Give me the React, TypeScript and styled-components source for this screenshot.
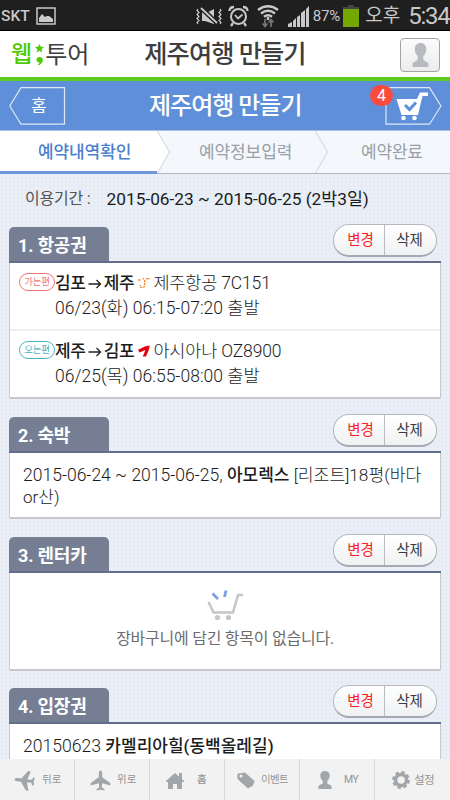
import React from 'react';
import styled, { createGlobalStyle } from 'styled-components';

const Global = createGlobalStyle`
  * { box-sizing: border-box; }
  html, body { margin: 0; padding: 0; overflow: hidden; }
  body { font-family: Roboto, "Noto Sans CJK KR", sans-serif; color: #1c1c1c; }
  svg { display: block; flex: none; }
`;

const Screen = styled.div`
  width: 450px;
  height: 800px;
  display: flex;
  flex-direction: column;
  overflow: hidden;
  background-color: #e9eef7;
  background-image: radial-gradient(#e4eaf4 0.8px, transparent 1px);
  background-size: 4px 4px;
`;

interface LabelProps {
  $size: number;
  $left?: number;
  $spacing?: number;
  $weight?: number;
  $color?: string;
  $line?: number;
}

const Label = styled.span<LabelProps>`
  display: block;
  white-space: pre;
  flex: none;
  font-size: ${p => p.$size}px;
  margin-left: ${p => p.$left ?? 0}px;
  letter-spacing: ${p => p.$spacing ?? 0}px;
  font-weight: ${p => p.$weight ?? 400};
  color: ${p => p.$color ?? 'inherit'};
  line-height: ${p => p.$line ?? 24}px;
`;

const StatusBar = styled.header`
  height: 31px;
  flex: none;
  display: flex;
  align-items: center;
  background: #1f1f1f;
  border-bottom: 1px solid #000;
  color: #c9c9c9;
  padding: 2px 0 0 1px;
`;

const Spacer = styled.div<{ $w: number }>`
  width: ${p => p.$w}px;
  flex: none;
`;

const BrandBar = styled.div`
  height: 50px;
  flex: none;
  display: flex;
  align-items: center;
  background: #fff;
  border-bottom: 4px solid #5fcd1e;
  padding: 1px 10px 0 11px;
`;

const UserButton = styled.button`
  width: 40px;
  height: 34px;
  margin: 1px 0 0 auto;
  padding: 0;
  display: flex;
  align-items: center;
  justify-content: center;
  border: 1px solid #a3a3a3;
  border-radius: 4px;
  background: linear-gradient(#fbfbfb, #ececec);
`;

const TitleBar = styled.div`
  height: 50px;
  flex: none;
  display: flex;
  align-items: center;
  background: #5f8fd8;
  border-bottom: 1px solid #a9c0e4;
  color: #fff;
  padding-left: 9px;
`;

const HomeButton = styled.div`
  display: grid;
  width: 57px;
  height: 38px;
  > * { grid-area: 1 / 1; }
`;

const CartButton = styled.div`
  position: relative;
  margin-left: auto;
  margin-right: 8px;
`;

const Badge = styled.span`
  position: absolute;
  left: -15px;
  top: -2px;
  width: 23px;
  height: 21px;
  border-radius: 11px;
  background: #fb4a3e;
  font-size: 16px;
  line-height: 21px;
  text-align: center;
`;

const Steps = styled.nav`
  height: 43px;
  flex: none;
  display: flex;
  background: #f4f8fc;
`;

const Step = styled.div<{ $w: number; $pad: number; $active?: boolean }>`
  width: ${p => p.$w}px;
  height: 43px;
  padding-left: ${p => p.$pad}px;
  padding-top: 9px;
  background: ${p => (p.$active ? '#fff' : '#f4f8fc')};
  border-bottom: ${p => (p.$active ? '3px solid #6f98dc' : '1px solid #b3b8bf')};
  color: ${p => (p.$active ? '#4c80cb' : '#9a9fa7')};
`;

const Period = styled.div`
  height: 53px;
  flex: none;
  display: flex;
  padding-top: 13px;
`;

const Section = styled.section<{ $gap: number }>`
  flex: none;
  margin: 0 9px ${p => p.$gap}px;
`;

const SectionHead = styled.div`
  height: 36px;
  display: flex;
  justify-content: space-between;
  border-bottom: 2px solid #636d8c;
`;

const Tab = styled.h2`
  margin: 0;
  width: 100px;
  height: 34px;
  padding: 6px 0 0 9px;
  border-radius: 5px 5px 0 0;
  background: #767e94;
  color: #fff;
`;

const Pill = styled.div`
  display: flex;
  width: 104px;
  height: 33px;
  margin: -3px 4px 0 0;
  border: 1px solid #b4b8bf;
  border-bottom: 2px solid #a5a9b0;
  border-radius: 16px;
  background: linear-gradient(#fff, #eff1f3);
`;

const PillButton = styled.button<{ $danger?: boolean }>`
  width: ${p => (p.$danger ? 51 : 51)}px;
  padding: ${p => (p.$danger ? '2px 0 0 3px' : '2px 2px 0 0')};
  border: 0;
  border-right: ${p => (p.$danger ? '1px solid #b9bcc2' : '0')};
  background: none;
  color: ${p => (p.$danger ? '#ff1c22' : '#3c3c3c')};
  font: 400 14.5px/28px Roboto, "Noto Sans CJK KR", sans-serif;
  letter-spacing: -0.2px;
`;

const Card = styled.div<{ $h: number }>`
  height: ${p => p.$h}px;
  background: #fff;
  border: solid #c6c8ca;
  border-width: 0 1px 2px;
  border-radius: 0 0 2px 2px;
`;

const Flight = styled.div<{ $h: number; $divided?: boolean }>`
  height: ${p => p.$h}px;
  padding: 7px 0 0 9px;
  display: flex;
  align-items: flex-start;
  border-bottom: ${p => (p.$divided ? '2px solid #eeeeee' : '0')};
`;

const FlightTag = styled.span<{ $color: string }>`
  width: 36px;
  height: 18px;
  margin-top: 3px;
  flex: none;
  border: 1px solid ${p => p.$color};
  border-radius: 9px;
  color: ${p => p.$color};
  font-size: 9.5px;
  line-height: 16px;
  text-align: center;
  letter-spacing: -0.3px;
`;

const Line = styled.div`
  display: flex;
  align-items: center;
  height: 25px;
`;

const Padded = styled.div`
  padding: 9px 0 0 13px;
`;

const Empty = styled.div`
  display: flex;
  flex-direction: column;
  align-items: center;
  padding-top: 17px;
`;

const Footer = styled.footer`
  height: 41px;
  flex: none;
  display: flex;
  background: #f2f2f2;
`;

const FooterItem = styled.div<{ $pad: number }>`
  width: 75px;
  display: flex;
  align-items: center;
  padding: 1px 0 0 ${p => p.$pad}px;
  border-right: 1px solid #d9d9d9;
  color: #949494;
  &:last-child { border-right: 0; }
`;

const Main = styled.main`
  flex: 1;
  min-height: 0;
  display: flex;
  flex-direction: column;
  overflow: hidden;
`;

const Person = ({ w, h, color }: { w: number; h: number; color: string }) => (
  <svg width={w} height={h} viewBox="0 0 16 24" preserveAspectRatio="none" fill={color}>
    <path d="M8 0C4.600 0 2.600 2.400 2.600 6c0 3 1 5.400 2.800 7v3.400C5 18 .5 18.300.5 21v3h15v-3c0-2.700-4.500-3-4.900-4.600V13c1.800-1.600 2.800-4 2.800-7 0-3.600-2-6-5.400-6z" />
  </svg>
);

const PlaneShape = ({ up }: { up?: boolean }) => (
  <svg width="21" height="21" viewBox="0 0 21 21">
    <g fill="#a1a6ab" transform={up ? undefined : 'rotate(-83 10.500 10.500)'}>
      <path d="M10.500.5c-1.200 0-1.700 1.600-1.700 3.300v3.400L.7 13v2.600l8.100-2.400.4 4-2.700 2v1.400l4-.8 4 .8v-1.400l-2.700-2 .4-4 8.100 2.400V13l-8.100-5.800V3.800c0-1.700-.5-3.300-1.700-3.300z" />
    </g>
  </svg>
);

const Chevron = ({ from }: { from: string }) => (
  <svg width="13" height="43" viewBox="0 0 13 43">
    <path d="M0 0L12.500 21L0 43z" fill={from} />
    <path d="M.3 0L12.500 21L.3 42.500" fill="none" stroke="#ccd2d8" />
    <path d="M0 42.500H13" stroke="#b3b8bf" />
  </svg>
);

const Arrow = () => (
  <svg width="14" height="12" viewBox="0 0 14 12">
    <path d="M.5 7H12.500M8.500 3L12.500 7L8.500 11" fill="none" stroke="#222" strokeWidth="1.300" />
  </svg>
);

const JejuAirMark = () => (
  <svg width="12" height="12" viewBox="0 0 12 12" fill="none" stroke="#f58533" strokeWidth="1.300">
    <path d="M.2 3h2.200M4.500 2.200l1.500-1M8 1.600l3.600.2" />
    <path d="M6.600 3v5.500c0 1.500-1 2.100-2.500 2.100S2 9.600 2 8" strokeDasharray="2.200 .8" />
  </svg>
);

const AsianaMark = () => (
  <svg width="12" height="12" viewBox="0 0 12 12">
    <path d="M0 4.800L7.500 1.200L11.800.5L10.800 5L8 11.500L4.800 11.500L7.400 4.900L1.500 7.600z" fill="#e60012" />
  </svg>
);

const EditPill = () => (
  <Pill>
    <PillButton $danger>변경</PillButton>
    <PillButton>삭제</PillButton>
  </Pill>
);

const Head = ({ title }: { title: string }) => (
  <SectionHead>
    <Tab><Label $size={18} $weight={700} $spacing={-0.2} $line={26}>{title}</Label></Tab>
    <EditPill />
  </SectionHead>
);

interface FlightProps {
  tag: string;
  color: string;
  from: string;
  to: string;
  mark: React.ReactNode;
  name: string;
  time: string;
}

const FlightInfo = ({ tag, color, from, to, mark, name, time }: FlightProps) => (
  <>
    <FlightTag $color={color}>{tag}</FlightTag>
    <div>
      <Line>
        <Label $size={17} $weight={500} $spacing={-0.3}>{from}</Label>
        <Spacer $w={2} />
        <Arrow />
        <Label $size={17} $weight={500} $left={2} $spacing={-0.3}>{to}</Label>
        <Spacer $w={4} />
        {mark}
        <Label $size={17.5} $left={3} $spacing={-0.15} $weight={300}>{name}</Label>
      </Line>
      <Line><Label $size={17.5} $spacing={0.03} $weight={300}>{time}</Label></Line>
    </div>
  </>
);

export default function App() {
  return (
    <Screen>
      <Global />
      <StatusBar>
        <Label $size={15.5} $weight={500}>SKT</Label>
        <Spacer $w={6} />
        <svg width="20" height="18" viewBox="0 0 20 18">
          <rect x="1" y="1" width="18" height="16" fill="none" stroke="#c9c9c9" strokeWidth="1.500" />
          <path d="M3 15v-4l3-4 3 3 2-1 2 0 4 3v3z" fill="#c9c9c9" />
        </svg>
        <Spacer $w={140} />
        <svg width="26" height="20" viewBox="0 0 26 20" fill="none" stroke="#c9c9c9" strokeWidth="1.200">
          <path d="M2 3l-1 1.500 2 2-2 2 2 2-2 2 2 2-2 2 1 1.500M24 3l1 1.500-2 2 2 2-2 2 2 2-2 2 2 2-1 1.500" />
          <path d="M6 6v9h3l9 3V3l-6 3z" fill="#c9c9c9" stroke="none" />
          <path d="M5 2l16 15" stroke="#1f1f1f" strokeWidth="4.500" />
          <path d="M5 2l16 15" strokeWidth="1.800" />
        </svg>
        <Spacer $w={6} />
        <svg width="21" height="22" viewBox="0 0 21 22" fill="none" stroke="#c9c9c9" strokeWidth="2">
          <circle cx="10.500" cy="11.500" r="7.500" />
          <path d="M7 10l3 3.500 4.500-4" strokeWidth="1.700" />
          <path d="M1.500 6C1.500 3 3 2 6 2M19.500 6C19.500 3 18 2 15 2M5 18l-2 3M16 18l2 3" strokeWidth="2.300" />
        </svg>
        <Spacer $w={8} />
        <svg width="22" height="24" viewBox="0 0 22 24" fill="none" stroke="#c9c9c9" strokeWidth="2.400">
          <path d="M1 6Q11-1.500 21 6M4 9.500Q11 4 18 9.500M7 12.800Q11 9.500 15 12.800" />
          <path d="M11 13v3" />
          <path d="M8 15v7M5.500 19.500L8 22.500l2.500-3M14 23v-7M11.500 18.500L14 15.500l2.500 3" stroke="#777" strokeWidth="1.700" />
        </svg>
        <Spacer $w={9} />
        <svg width="22" height="21" viewBox="0 0 22 21" fill="#c9c9c9">
          <path d="M0 21v-3l4-2v5zM5 21v-6l3-3v9zM9 21V11l3-2v12zM13 21V7l4-3v17zM18 21V3l3-3v21z" />
        </svg>
        <Label $size={15} $left={3} $spacing={-0.1}>87%</Label>
        <Spacer $w={3} />
        <svg width="16" height="22" viewBox="0 0 16 22">
          <path d="M5 0h6v2h5v2H0V2h5z" fill="#454545" />
          <path d="M0 4h16v18H0z" fill="#73a800" />
        </svg>
        <Label $size={19} $left={6}>오후</Label>
        <Label $size={24} $left={8} $spacing={-1.2}>5:34</Label>
      </StatusBar>

      <BrandBar>
        <Label $size={23} $weight={500} $color="#50ca00" $line={34}>웹</Label>
        <Spacer $w={3} />
        <svg width="9" height="22" viewBox="0 0 9 22" fill="#50ca00">
          <path d="M4.500 0l1.300 2.800 3.200.3-2.400 2.100.7 3.300-2.800-1.700-2.800 1.700.7-3.300L0 3.100l3.200-.3z" />
          <path d="M4.500 13c2 0 3.300 1.200 3.300 3.100 0 2.500-2 4.500-4.300 5.200l-.7-.8c1-.5 1.800-1.200 2-2C3 18.800 1.500 17.700 1.500 16c0-1.800 1.200-3 3-3z" />
        </svg>
        <Label $size={24} $left={1} $color="#3e3e3e" $line={34}>투어</Label>
        <Label $size={25.3} $left={55} $weight={500} $spacing={-1} $color="#3e3e3e" $line={34}>제주여행 만들기</Label>
        <UserButton><Person w={17} h={24} color="#b7bbc0" /></UserButton>
      </BrandBar>

      <TitleBar>
        <HomeButton>
          <svg width="57" height="38" viewBox="0 0 57 38">
            <path d="M12 .7h43.500v36.500H12L.8 19z" fill="none" stroke="#dce7f8" strokeWidth="1.200" />
          </svg>
          <Label $size={17} $left={22} $line={39}>홈</Label>
        </HomeButton>
        <Label $size={24} $left={83} $weight={500} $spacing={-1} $line={34}>제주여행 만들기</Label>
        <CartButton>
          <svg width="57" height="38" viewBox="0 0 57 38">
            <path d="M1 .7h43.500L56 19 44.500 37.200H1z" fill="none" stroke="#dce7f8" strokeWidth="1.200" />
            <path d="M11.500 12h20.500l3-6.500H43V9h-5.500L33 28H16.500z" fill="#fff" />
            <circle cx="18.500" cy="31" r="2.300" fill="#fff" />
            <circle cx="29.500" cy="31" r="2.300" fill="#fff" />
            <path d="M20 18l4.500 4.500L31 15.500" fill="none" stroke="#5f8fd8" strokeWidth="3" />
          </svg>
          <Badge>4</Badge>
        </CartButton>
      </TitleBar>

      <Steps>
        <Step $w={157} $pad={38} $active><Label $size={17} $spacing={-0.1} $weight={500}>예약내역확인</Label></Step>
        <Chevron from="#fff" />
        <Step $w={145} $pad={29}><Label $size={17} $spacing={-0.1}>예약정보입력</Label></Step>
        <Chevron from="#f4f8fc" />
        <Step $w={122} $pad={33}><Label $size={17} $spacing={-0.2}>예약완료</Label></Step>
      </Steps>

      <Main>
        <Period>
          <Label $size={16} $left={25} $spacing={-0.2} $color="#555">이용기간 :</Label>
          <Label $size={17.3} $left={16}>2015-06-23 ~ 2015-06-25 (2박3일)</Label>
        </Period>

        <Section $gap={18}>
          <Head title="1. 항공권" />
          <Card $h={136}>
            <Flight $h={68} $divided>
              <FlightInfo tag="가는편" color="#f0757b" from="김포" to="제주" mark={<JejuAirMark />} name="제주항공 7C151" time="06/23(화) 06:15-07:20 출발" />
            </Flight>
            <Flight $h={66}>
              <FlightInfo tag="오는편" color="#4db3bf" from="제주" to="김포" mark={<AsianaMark />} name="아시아나 OZ8900" time="06/25(목) 06:55-08:00 출발" />
            </Flight>
          </Card>
        </Section>

        <Section $gap={18}>
          <Head title="2. 숙박" />
          <Card $h={66}>
            <Padded>
              <Line>
                <Label $size={17.55} $weight={300}>2015-06-24 ~ 2015-06-25, </Label>
                <Label $size={17} $weight={500}>아모렉스</Label>
                <Label $size={17.2} $weight={300}> [리조트]18평(바다</Label>
              </Line>
              <Label $size={17} $weight={300} $line={20}>or산)</Label>
            </Padded>
          </Card>
        </Section>

        <Section $gap={17}>
          <Head title="3. 렌터카" />
          <Card $h={98}>
            <Empty>
              <svg width="36" height="31" viewBox="0 0 36 31">
                <path d="M1.500 12L6.500 22.500H26L31 5H36" fill="none" stroke="#c6c6c6" strokeWidth="2.500" />
                <circle cx="10.500" cy="27.500" r="2.600" fill="#c6c6c6" />
                <circle cx="21.500" cy="27.500" r="2.600" fill="#c6c6c6" />
                <path d="M5.500 3.500L11 9M19 .5L17.500 7" stroke="#7b9fe2" strokeWidth="2.800" />
              </svg>
              <Label $size={16} $spacing={-0.25} $color="#6c6c6c" $line={36}>장바구니에 담긴 항목이 없습니다.</Label>
            </Empty>
          </Card>
        </Section>

        <Section $gap={0}>
          <Head title="4. 입장권" />
          <Card $h={80}>
            <Padded>
              <Line>
                <Label $size={17.6} $weight={300}>20150623 </Label>
                <Label $size={17} $weight={500}>카멜리아힐(동백올레길)</Label>
              </Line>
            </Padded>
          </Card>
        </Section>
      </Main>

      <Footer>
        <FooterItem $pad={14}><PlaneShape /><Label $size={10.5} $left={7}>뒤로</Label></FooterItem>
        <FooterItem $pad={15}><PlaneShape up /><Label $size={10.5} $left={6}>위로</Label></FooterItem>
        <FooterItem $pad={16}>
          <svg width="18" height="17" viewBox="0 0 18 17" fill="#a1a6ab">
            <path d="M9 1l4 3.500V1h3v6.200L18 9v1h-2v7h-5v-5H7v5H2v-7H0V9z" />
          </svg>
          <Label $size={10.5} $left={13} $weight={500}>홈</Label>
        </FooterItem>
        <FooterItem $pad={12}>
          <svg width="18" height="17" viewBox="0 0 18 17">
            <path d="M1 1.500L8 .5 17.500 9 16 13.500 11 16.500 1 7.500Q-.5 4 1 1.500z" fill="#a1a6ab" />
            <circle cx="4" cy="4" r="1.500" fill="#f2f2f2" />
          </svg>
          <Label $size={10.5} $left={6} $spacing={-0.6}>이벤트</Label>
        </FooterItem>
        <FooterItem $pad={18}>
          <Person w={14} h={18} color="#a1a6ab" />
          <Label $size={10.5} $left={12} $spacing={-0.4}>MY</Label>
        </FooterItem>
        <FooterItem $pad={17}>
          <svg width="18" height="18" viewBox="0 0 18 18">
            <circle cx="9" cy="9" r="5.500" fill="none" stroke="#a1a6ab" strokeWidth="3.500" />
            <circle cx="9" cy="9" r="7.700" fill="none" stroke="#a1a6ab" strokeWidth="2.500" strokeDasharray="3.500 2.548" />
          </svg>
          <Label $size={11.5} $left={4} $spacing={-0.6}>설정</Label>
        </FooterItem>
      </Footer>
    </Screen>
  );
}
